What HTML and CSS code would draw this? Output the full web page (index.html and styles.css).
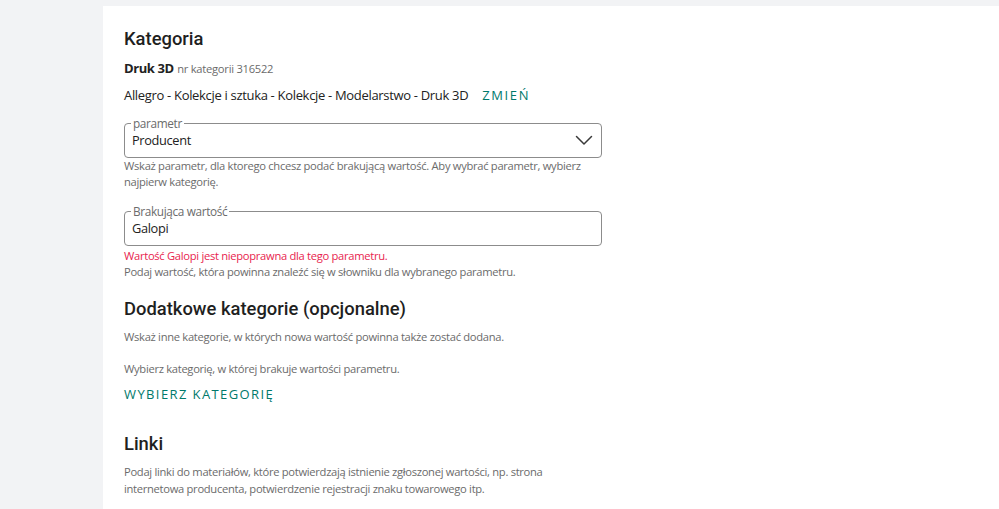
FILE: index.html
```html
<!DOCTYPE html>
<html lang="pl">
<head>
<meta charset="utf-8">
<title>Kategoria</title>
<link rel="stylesheet" href="styles.css">
</head>
<body>
<div class="page">
  <main class="panel">
    <h2 class="heading h-first">Kategoria</h2>
    <p class="cat-line"><strong class="cat-name">Druk 3D</strong> <span class="cat-id">nr kategorii 316522</span></p>
    <p class="crumbs"><span>Allegro - Kolekcje i sztuka - Kolekcje - Modelarstwo - Druk 3D</span><a class="link-btn zmien" href="#">ZMIEŃ</a></p>

    <fieldset class="field">
      <legend class="field-label">parametr</legend>
      <div class="field-row">
        <span class="field-value">Producent</span>
        <svg class="chevron" width="18" height="11" viewBox="0 0 18 11"><path d="M1.5 1.5 L9 9 L16.5 1.5" fill="none" stroke="#3a3a3a" stroke-width="1.5" stroke-linecap="round" stroke-linejoin="round"/></svg>
      </div>
    </fieldset>
    <p class="help">Wskaż parametr, dla ktorego chcesz podać brakującą wartość. Aby wybrać parametr, wybierz najpierw kategorię.</p>

    <fieldset class="field field-2">
      <legend class="field-label">Brakująca wartość</legend>
      <div class="field-row">
        <span class="field-value">Galopi</span>
      </div>
    </fieldset>
    <p class="help error">Wartość Galopi jest niepoprawna dla tego parametru.</p>
    <p class="help">Podaj wartość, która powinna znaleźć się w słowniku dla wybranego parametru.</p>

    <h2 class="heading h-extra">Dodatkowe kategorie (opcjonalne)</h2>
    <p class="help p-extra">Wskaż inne kategorie, w których nowa wartość powinna także zostać dodana.</p>
    <p class="help p-choose">Wybierz kategorię, w której brakuje wartości parametru.</p>
    <a class="link-btn choose" href="#">WYBIERZ KATEGORIĘ</a>

    <h2 class="heading h-links">Linki</h2>
    <p class="help p-links">Podaj linki do materiałów, które potwierdzają istnienie zgłoszonej wartości, np. strona internetowa producenta, potwierdzenie rejestracji znaku towarowego itp.</p>
  </main>
</div>
</body>
</html>
```

FILE: styles.css
```css
* { box-sizing: border-box; }
html, body { margin: 0; padding: 0; }
body {
  background: #f2f3f5;
  font-family: "Open Sans", "Liberation Sans", sans-serif;
  color: #222;
  width: 999px;
  height: 509px;
  overflow: hidden;
}
.page {
  padding: 6px 0 0 103px;
  height: 509px;
}
.panel {
  background: #fff;
  height: 100%;
  padding: 22px 0 0 21px;
  display: flex;
  flex-direction: column;
  align-items: flex-start;
}
p { margin: 0; }
.heading {
  font-family: Roboto, "Liberation Sans", sans-serif;
  font-weight: 500;
  font-size: 18.4px;
  line-height: 22px;
  margin: 0;
  color: #1f1f1f;
}
.cat-line {
  margin-top: 8px;
  line-height: 20px;
  font-size: 13px;
}
.cat-name { font-weight: 700; letter-spacing: -0.4px; }
.cat-id { font-size: 11.2px; letter-spacing: -0.26px; color: #6b6b6b; }
.crumbs {
  margin-top: 6px;
  line-height: 20px;
  font-size: 13px;
  letter-spacing: -0.32px;
  display: flex;
  gap: 14px;
}
.link-btn {
  color: #00796b;
  text-decoration: none;
  font-size: 13px;
  line-height: 20px;
}
.zmien { letter-spacing: 1.6px; }
.choose { letter-spacing: 1.4px; }
.field {
  margin: 11px 0 0 0;
  padding: 0 7px 8px 7px;
  width: 478px;
  border: 1px solid #8c8c8c;
  border-radius: 4px;
  min-width: 0;
}
.field-2 { margin-top: 14px; }
.field-label {
  font-size: 11.8px;
  letter-spacing: -0.35px;
  line-height: 14px;
  color: #6b6b6b;
  padding: 0 2px;
  margin-left: -1px;
}
.field-row {
  display: flex;
  align-items: center;
  justify-content: space-between;
  height: 18px;
  margin-top: 1px;
}
.field-value {
  font-size: 12.8px;
  letter-spacing: -0.35px;
  line-height: 18px;
  color: #222;
}
.chevron { margin-right: 1px; }
.help {
  font-size: 11.2px;
  letter-spacing: -0.3px;
  line-height: 16px;
  color: #6b6b6b;
  width: 478px;
}
.error { color: #e8234e; margin-top: 2px; }
.h-extra { margin-top: 18px; }
.p-extra { margin-top: 9px; }
.p-choose { margin-top: 16px; }
.choose { margin-top: 7px; }
.h-links { margin-top: 29px; }
.p-links { margin-top: 8px; line-height: 17px; }
```
